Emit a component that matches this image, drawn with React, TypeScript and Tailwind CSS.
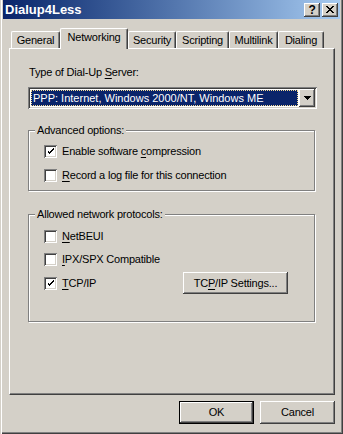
import type { ReactNode } from 'react'

const raised =
  'shadow-[inset_-1px_-1px_#404040,inset_1px_1px_#ffffff,inset_-2px_-2px_#808080]'
const sunken =
  'shadow-[inset_1px_1px_#808080,inset_-1px_-1px_#ffffff,inset_2px_2px_#404040,inset_-2px_-2px_#d4d0c8]'
const etched = 'border border-[#808080] shadow-[inset_1px_1px_#ffffff,1px_1px_#ffffff]'

function Key({ children }: { children: ReactNode }) {
  return <span className="underline underline-offset-[2px] decoration-1">{children}</span>
}

function Checkbox({ checked }: { checked?: boolean }) {
  return (
    <div className={`w-[13px] h-[13px] shrink-0 bg-white flex items-center justify-center ${sunken}`}>
      {checked && (
        <svg width="7" height="7" viewBox="0 0 7 7" shapeRendering="crispEdges">
          <path d="M0 2h1v3h1v1h1v-1h1v-1h1v-1h1v-1h1v-2h-1v1h-1v1h-1v1h-1v1h-1v-1h-1v-1z" fill="#000" />
          <path d="M1 3h1v1h-1zM2 4h1v1h-1z" fill="#000" />
        </svg>
      )}
    </div>
  )
}

function CheckRow({ checked, children }: { checked?: boolean; children: ReactNode }) {
  return (
    <div className="flex items-center h-[13px]">
      <Checkbox checked={checked} />
      <span className="ml-[5px] leading-[13px]">{children}</span>
    </div>
  )
}

function Group({ title, className, children }: { title: string; className?: string; children: ReactNode }) {
  return (
    <div className={`relative w-[287px] ${etched} ${className ?? ''}`}>
      <span className="absolute -top-[7px] left-[6px] px-[2px] bg-[#d4d0c8] leading-[13px]">{title}</span>
      {children}
    </div>
  )
}

const tabs = [
  { name: 'General', w: 'w-[49px]' },
  { name: 'Networking', w: 'w-[68px]', active: true },
  { name: 'Security', w: 'w-[48px]' },
  { name: 'Scripting', w: 'w-[53px]' },
  { name: 'Multilink', w: 'w-[49px]' },
  { name: 'Dialing', w: 'w-[46px]' },
]

export default function App() {
  return (
    <div
      className="w-[343px] h-[434px] bg-[#d4d0c8] text-black text-[11px] tracking-[-0.2px] flex flex-col shadow-[inset_1px_0_#d4d0c8,inset_2px_0_#ffffff,inset_-1px_-1px_#404040,inset_-2px_-2px_#808080]"
      style={{ fontFamily: '"Liberation Sans", Arial, sans-serif' }}
    >
      {/* title bar */}
      <div className="mx-[3px] h-[19px] bg-gradient-to-r from-[#0a246a] to-[#a6caf0] flex items-center pl-[2px] pr-[2px]">
        <span className="text-white font-bold text-[13px] tracking-normal leading-none">Dialup4Less</span>
        <div className="ml-auto flex gap-[2px]">
          <div className={`w-[16px] h-[14px] bg-[#d4d0c8] flex items-center justify-center font-bold text-[12px] leading-none ${raised}`}>
            ?
          </div>
          <div className={`w-[16px] h-[14px] bg-[#d4d0c8] flex items-center justify-center ${raised}`}>
            <svg width="8" height="7" viewBox="0 0 8 7" shapeRendering="crispEdges">
              <path d="M0 0h2v1h1v1h2v-1h1v-1h2v1h-1v1h-1v1h-1v1h1v1h1v1h1v1h-2v-1h-1v-1h-2v1h-1v1h-2v-1h1v-1h1v-1h1v-1h-1v-1h-1v-1h-1z" fill="#000" />
            </svg>
          </div>
        </div>
      </div>

      {/* tabs */}
      <div className="mt-[9px] ml-[11px] h-[20px] flex items-end relative z-10">
        {tabs.map((t) => (
          <div
            key={t.name}
            className={`${t.w} ${
              t.active ? 'h-[21px] -mb-[1px] pb-[3px]' : 'h-[17px]'
            } bg-[#d4d0c8] border-l border-t border-white border-r border-r-[#404040] rounded-tl-[2px] rounded-tr-[2px] shadow-[inset_-1px_0_#808080] flex items-center justify-center leading-[13px]`}
          >
            {t.name}
          </div>
        ))}
      </div>

      {/* panel */}
      <div className="ml-[9px] w-[326px] h-[347px] border-l border-t border-white border-r border-b border-r-[#404040] border-b-[#404040] shadow-[inset_-1px_-1px_#808080] pl-[18px] flex flex-col">
        <div className="mt-[17px] pl-[1px] leading-[13px]">
          Type of Dial-Up <Key>S</Key>erver:
        </div>

        {/* select */}
        <div className={`mt-[8px] w-[289px] h-[22px] bg-white p-[2px] flex ${sunken}`}>
          <div className="flex-1 p-[1px]">
            <div className="h-full bg-[#0a246a] border border-dotted border-[#f5db95] text-white flex items-center pl-[1px] leading-[13px] tracking-normal">
              PPP: Internet, Windows 2000/NT, Windows ME
            </div>
          </div>
          <div className={`w-[16px] h-[18px] bg-[#d4d0c8] flex items-center justify-center ${raised}`}>
            <svg width="7" height="4" viewBox="0 0 7 4" shapeRendering="crispEdges">
              <path d="M0 0h7v1h-1v1h-1v1h-1v1h-1v-1h-1v-1h-1v-1h-1z" fill="#000" />
            </svg>
          </div>
        </div>

        <Group title="Advanced options:" className="mt-[21px] pt-[14px] pl-[15px] pb-[8px]">
          <div className="flex flex-col gap-[11px]">
            <CheckRow checked>
              Enable software <Key>c</Key>ompression
            </CheckRow>
            <CheckRow>
              <Key>R</Key>ecord a log file for this connection
            </CheckRow>
          </div>
        </Group>

        <Group title="Allowed network protocols:" className="mt-[23px] pt-[15px] pl-[15px] pb-[27px]">
          <div className="flex flex-col">
            <CheckRow>
              <Key>N</Key>etBEUI
            </CheckRow>
            <div className="mt-[10px]">
              <CheckRow>
                <Key>I</Key>PX/SPX Compatible
              </CheckRow>
            </div>
            <div className="mt-[6px] flex items-center h-[22px]">
              <div className="w-[139px]">
                <CheckRow checked>
                  <Key>T</Key>CP/IP
                </CheckRow>
              </div>
              <div className={`w-[105px] h-[22px] bg-[#d4d0c8] flex items-center justify-center leading-[13px] ${raised}`}>
                TC<Key>P</Key>/IP Settings...
              </div>
            </div>
          </div>
        </Group>
      </div>

      {/* buttons */}
      <div className="mt-[6px] flex justify-end gap-[6px] pr-[8px]">
        <div className="w-[75px] h-[23px] border border-black">
          <div className={`w-full h-full bg-[#d4d0c8] flex items-center justify-center leading-[13px] ${raised}`}>OK</div>
        </div>
        <div className={`w-[75px] h-[23px] bg-[#d4d0c8] flex items-center justify-center leading-[13px] ${raised}`}>
          Cancel
        </div>
      </div>
    </div>
  )
}
